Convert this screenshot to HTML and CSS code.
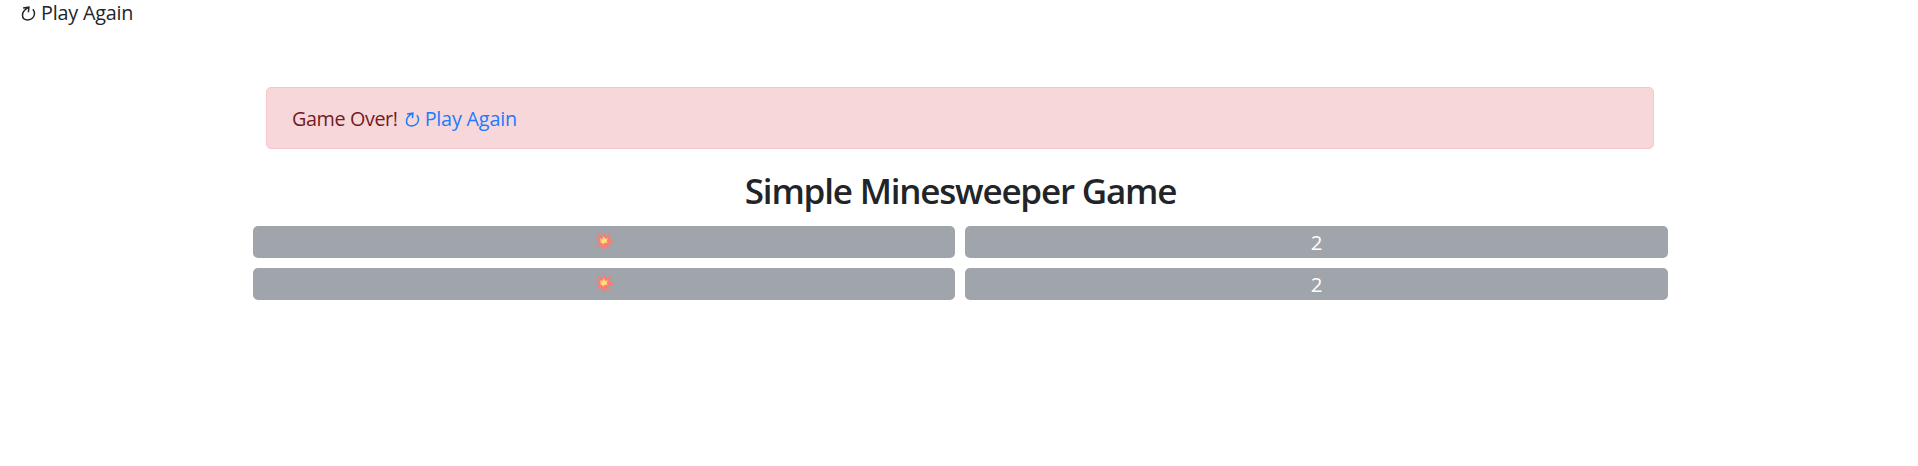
FILE: index.html
```
<!DOCTYPE html>
<html lang="en">
<head>
<meta charset="utf-8">
<title>Simple Minesweeper Game</title>
<link rel="stylesheet" href="styles.css">
</head>
<body>
<svg class="defs" width="0" height="0">
<symbol id="reload" viewBox="0 0 14 15"><path d="M1.6 1.9L7.4 1.2L6.9 6.2M7.2 1.4C3.5 3.2 1 6 1 9.2C1 12.2 3.2 13.9 6.2 13.9C10.2 13.9 13 11 13 7.6C13 5.8 12.4 4.4 11.4 3.2" fill="none" stroke="currentColor" stroke-width="1.5"/></symbol>
<symbol id="boom" viewBox="0 0 55 57"><path d="M6 0L22 12L28 1L33 13L48 3L41 20L55 29L38 34L43 49L30 40L24 57L18 38L3 43L12 30L0 18L15 20Z" fill="#fc7b75"/><path d="M25 11L29 19L38 17L34 25L38 32L29 31L24 38L21 31L13 32L17 25L14 18L22 19Z" fill="#fbb26f"/><path d="M25 13L29 20L36 21L33 26L34 31L27 30L22 34L19 28L15 22L21 21Z" fill="#ffe07c"/></symbol>
</svg>
<nav class="topbar"><a class="again"><svg class="reload"><use href="#reload"/></svg><span>Play Again</span></a></nav>
<main class="container">
<div class="alert"><span class="over">Game Over!</span><a class="again link"><svg class="reload"><use href="#reload"/></svg><span>Play Again</span></a></div>
<h1 class="title">Simple Minesweeper Game</h1>
<div class="board">
<button class="cell" disabled><svg class="boom"><use href="#boom"/></svg></button>
<button class="cell" disabled>2</button>
<button class="cell" disabled><svg class="boom"><use href="#boom"/></svg></button>
<button class="cell" disabled>2</button>
</div>
</main>
</body>
</html>
```
FILE: styles.css
```
* { box-sizing: border-box; }
body { margin: 0; background: #fff; color: #212529; font: 370 19.8px/30px "Open Sans", "Noto Sans", sans-serif; letter-spacing: -.2px; }
.defs { display: block; }
.topbar { height: 87px; padding: 0 21px; margin-top: -2px; }
.again { display: inline-flex; align-items: center; gap: 5px; }
.reload { width: 15px; height: 15px; }
.link { color: #1a7cff; }
.container { width: 1415px; margin-left: 253px; padding-top: 2px; }
.alert { display: flex; gap: 7px; height: 62px; margin: 0 14px 0 13px; padding: 16px 25px 14px; border: 1px solid #f5c6cb; border-radius: 5px; background: #f7d7da; color: #721c24; }
.over { letter-spacing: -.4px; }
.title { margin: 18px 0 12px; font-size: 35px; line-height: 47px; font-weight: 580; letter-spacing: -1.2px; text-align: center; }
.board { display: grid; grid-template-columns: 702px 703px; gap: 10px; }
.cell { display: flex; align-items: center; justify-content: center; height: 32px; padding: 0; border: 0; border-radius: 5px; background: #a0a5ab; color: #fff; font: inherit; font-size: 20.5px; font-weight: 400; }
.boom { width: 19px; height: 20px; }
```
